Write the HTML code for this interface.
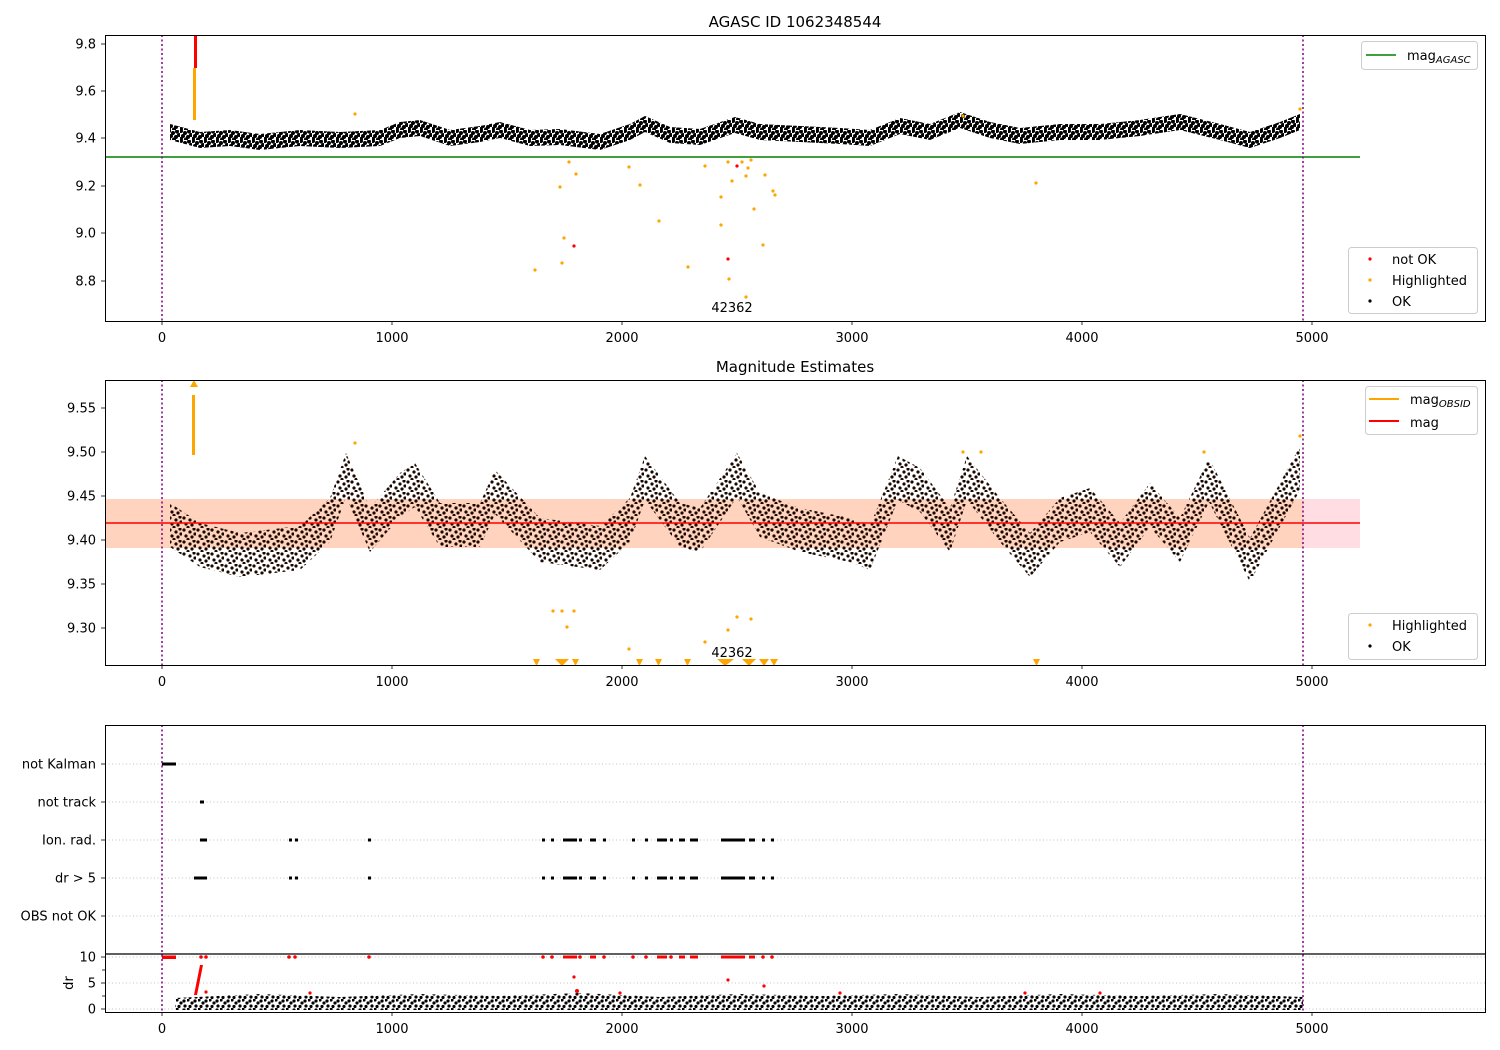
<!DOCTYPE html>
<html><head><meta charset="utf-8"><style>
html,body{margin:0;padding:0;background:#fff;}
svg{display:block;font-family:"DejaVu Sans","Liberation Sans",sans-serif;}
</style></head><body>
<svg width="1500" height="1050" viewBox="0 0 1500 1050" xmlns="http://www.w3.org/2000/svg">
<defs>
<pattern id="p1" width="12" height="10" patternUnits="userSpaceOnUse">
<g fill="#000"><circle cx="1" cy="1" r="2"/><circle cx="5" cy="3" r="2"/><circle cx="9" cy="1.5" r="2"/><circle cx="3" cy="6" r="2"/><circle cx="8" cy="7" r="2"/><circle cx="11" cy="5" r="2"/><circle cx="1" cy="9" r="2"/><circle cx="6" cy="9.5" r="2"/></g>
</pattern>
<pattern id="p2" width="14" height="12" patternUnits="userSpaceOnUse">
<g fill="#1a0800"><circle cx="2" cy="2" r="1.6"/><circle cx="8" cy="4" r="1.6"/><circle cx="12" cy="1" r="1.6"/><circle cx="4" cy="8" r="1.6"/><circle cx="10" cy="9" r="1.6"/><circle cx="6" cy="11.5" r="1.6"/><circle cx="13" cy="6" r="1.6"/></g>
</pattern>
<pattern id="p3" width="11" height="9" patternUnits="userSpaceOnUse">
<g fill="#000"><circle cx="1" cy="1" r="1.6"/><circle cx="5" cy="4" r="1.6"/><circle cx="9" cy="7" r="1.6"/><circle cx="3" cy="7.5" r="1.6"/><circle cx="8" cy="2" r="1.6"/></g>
</pattern>
</defs>
<rect width="1500" height="1050" fill="#fff"/>
<rect x="105" y="499" width="1255" height="49" fill="#ffdde2"/>
<rect x="105" y="499" width="1198" height="49" fill="#ffd3bd"/>
<g stroke="#b0b0b0" stroke-width="0.8" stroke-dasharray="1,2.5">
<line x1="105" x2="1485" y1="764" y2="764"/><line x1="105" x2="1485" y1="802" y2="802"/>
<line x1="105" x2="1485" y1="840" y2="840"/><line x1="105" x2="1485" y1="878" y2="878"/>
<line x1="105" x2="1485" y1="916" y2="916"/>
<line x1="105" x2="1485" y1="957" y2="957"/><line x1="105" x2="1485" y1="983" y2="983"/>
<line x1="105" x2="1485" y1="1009" y2="1009"/>
</g>
<polygon fill="url(#p1)" points="170,124 200,132 230,130 260,134 300,130 340,132 380,130 400,122 420,120 450,130 480,126 500,122 530,130 560,129 600,134 630,124 645,116 670,127 700,129 735,117 760,124 800,126 840,128 870,130 900,118 930,124 960,112 990,122 1020,128 1060,124 1100,124 1140,120 1180,114 1220,124 1250,132 1280,122 1300,114 1300,130 1280,138 1250,148 1220,140 1180,130 1140,136 1100,140 1060,140 1020,144 990,138 960,128 930,140 900,134 870,146 840,144 800,142 760,140 735,133 700,145 670,143 645,132 630,140 600,150 560,145 530,146 500,138 480,142 450,146 420,136 400,138 380,146 340,148 300,146 260,150 230,146 200,148 170,140"/>
<line x1="105" y1="157" x2="1360" y2="157" stroke="#008000" stroke-width="1.5"/>
<polygon fill="url(#p2)" points="170,503 200,523 240,533 300,526 330,498 346,453 370,508 400,473 415,463 440,503 480,503 495,470 540,518 600,526 630,498 645,456 680,503 700,508 737,453 760,493 800,508 850,518 870,526 898,456 920,468 950,508 967,456 1000,498 1030,533 1060,498 1090,488 1120,523 1150,483 1180,518 1209,458 1250,538 1300,446 1300,490 1250,582 1209,502 1180,562 1150,527 1120,567 1090,532 1060,542 1030,577 1000,542 967,500 950,552 920,512 898,500 870,570 850,562 800,552 760,537 737,497 700,552 680,547 645,500 630,542 600,570 540,562 495,514 480,547 440,547 415,507 400,517 370,552 346,497 330,542 300,570 240,577 200,567 170,547"/>
<line x1="105" y1="523" x2="1360" y2="523" stroke="#ff0000" stroke-width="1.5"/>
<polygon fill="url(#p3)" points="175,998 260,994 340,997 420,994 500,996 580,993 660,997 740,994 820,996 900,994 980,997 1060,994 1140,996 1220,994 1303,997 1303,1010 175,1010"/>
<g fill="orange">
<rect x="193" y="68" width="3" height="52"/>
<circle cx="535" cy="270" r="1.6"/><circle cx="560" cy="187" r="1.6"/><circle cx="562" cy="263" r="1.6"/><circle cx="564" cy="238" r="1.6"/><circle cx="569" cy="162" r="1.6"/><circle cx="576" cy="174" r="1.6"/>
<circle cx="629" cy="167" r="1.6"/><circle cx="640" cy="185" r="1.6"/><circle cx="659" cy="221" r="1.6"/><circle cx="688" cy="267" r="1.6"/><circle cx="705" cy="166" r="1.6"/><circle cx="721" cy="197" r="1.6"/><circle cx="721" cy="225" r="1.6"/><circle cx="728" cy="162" r="1.6"/><circle cx="729" cy="279" r="1.6"/><circle cx="732" cy="181" r="1.6"/><circle cx="742" cy="162" r="1.6"/><circle cx="746" cy="176" r="1.6"/><circle cx="748" cy="168" r="1.6"/><circle cx="751" cy="160" r="1.6"/><circle cx="754" cy="209" r="1.6"/><circle cx="763" cy="245" r="1.6"/><circle cx="765" cy="175" r="1.6"/><circle cx="773" cy="191" r="1.6"/><circle cx="775" cy="195" r="1.6"/><circle cx="746" cy="297" r="1.6"/><circle cx="1036" cy="183" r="1.6"/><circle cx="355" cy="114" r="1.6"/><circle cx="963" cy="116" r="1.6"/><circle cx="1300" cy="109" r="1.6"/>
</g>
<g fill="red"><rect x="194" y="36" width="3" height="32"/><circle cx="574" cy="246" r="1.6"/><circle cx="728" cy="259" r="1.6"/><circle cx="737" cy="166" r="1.6"/></g>
<g fill="orange">
<rect x="192" y="395" width="3" height="60"/>
<polygon points="190,387 198,387 194,380"/>
<circle cx="553" cy="611" r="1.6"/><circle cx="562" cy="611" r="1.6"/><circle cx="567" cy="627" r="1.6"/><circle cx="574" cy="611" r="1.6"/><circle cx="629" cy="649" r="1.6"/><circle cx="705" cy="642" r="1.6"/><circle cx="728" cy="630" r="1.6"/><circle cx="737" cy="617" r="1.6"/><circle cx="751" cy="619" r="1.6"/><circle cx="355" cy="443" r="1.6"/><circle cx="963" cy="452" r="1.6"/><circle cx="981" cy="452" r="1.6"/><circle cx="1204" cy="452" r="1.6"/><circle cx="1300" cy="436" r="1.6"/>
</g>
<g fill="orange">
<polygon points="533,659 540,659 536.5,666"/><polygon points="555,659 569,659 562,666"/><polygon points="572,659 579,659 575.5,666"/><polygon points="636,659 643,659 639.5,666"/><polygon points="655,659 662,659 658.5,666"/><polygon points="684,659 691,659 687.5,666"/><polygon points="717,659 734,659 725,666"/><polygon points="742,659 756,659 749,666"/><polygon points="759,659 769,659 764,666"/><polygon points="770,659 778,659 774,666"/><polygon points="1033,659 1040,659 1036.5,666"/>
</g>
<g fill="#000">
<rect x="162" y="762.5" width="14" height="3"/>
<rect x="200" y="800.5" width="4" height="3"/>
<g id="ev"><rect x="200" y="838.5" width="7" height="3"/><rect x="289" y="838.5" width="3" height="3"/><rect x="295" y="838.5" width="3" height="3"/><rect x="368" y="838.5" width="3" height="3"/><rect x="542" y="838.5" width="3" height="3"/><rect x="551" y="838.5" width="3" height="3"/><rect x="563" y="838.5" width="14" height="3"/><rect x="579" y="838.5" width="3" height="3"/><rect x="590" y="838.5" width="6" height="3"/><rect x="603" y="838.5" width="3" height="3"/><rect x="632" y="838.5" width="3" height="3"/><rect x="645" y="838.5" width="3" height="3"/><rect x="657" y="838.5" width="10" height="3"/><rect x="670" y="838.5" width="3" height="3"/><rect x="679" y="838.5" width="6" height="3"/><rect x="690" y="838.5" width="8" height="3"/><rect x="721" y="838.5" width="24" height="3"/><rect x="749" y="838.5" width="6" height="3"/><rect x="762" y="838.5" width="3" height="3"/><rect x="771" y="838.5" width="3" height="3"/></g>
<use href="#ev" y="38"/>
<rect x="194" y="876.5" width="12" height="3"/>
</g>
<g fill="red">
<rect x="162" y="955.5" width="14" height="3.5"/>
<polygon points="194,995 200,965 203,965 197,995"/>
<circle cx="201" cy="957" r="1.8"/><circle cx="206" cy="957" r="1.8"/><circle cx="289" cy="957" r="1.8"/><circle cx="295" cy="957" r="1.8"/><circle cx="369" cy="957" r="1.8"/><circle cx="543" cy="957" r="1.8"/><circle cx="552" cy="957" r="1.8"/><rect x="563" y="955.5" width="14" height="3"/><circle cx="580" cy="957" r="1.8"/><rect x="590" y="955.5" width="6" height="3"/><circle cx="604" cy="957" r="1.8"/><circle cx="633" cy="957" r="1.8"/><circle cx="646" cy="957" r="1.8"/><rect x="657" y="955.5" width="10" height="3"/><circle cx="671" cy="957" r="1.8"/><rect x="679" y="955.5" width="6" height="3"/><rect x="690" y="955.5" width="8" height="3"/><rect x="721" y="955.5" width="24" height="3"/><rect x="749" y="955.5" width="6" height="3"/><circle cx="763" cy="957" r="1.8"/><circle cx="772" cy="957" r="1.8"/>
<circle cx="574" cy="977" r="1.6"/><circle cx="577" cy="991" r="2"/><circle cx="728" cy="980" r="1.6"/><circle cx="764" cy="986" r="1.6"/><circle cx="206" cy="992" r="1.6"/><circle cx="310" cy="993" r="1.6"/><circle cx="620" cy="993" r="1.6"/><circle cx="840" cy="993" r="1.6"/><circle cx="1100" cy="993" r="1.6"/><circle cx="1025" cy="993" r="1.6"/>
</g>
<g stroke="#800080" stroke-width="1.5" stroke-dasharray="2,2.5">
<line x1="162" x2="162" y1="35" y2="321"/><line x1="1303" x2="1303" y1="35" y2="321"/>
<line x1="162" x2="162" y1="380" y2="665"/><line x1="1303" x2="1303" y1="380" y2="665"/>
<line x1="162" x2="162" y1="725" y2="1012"/><line x1="1303" x2="1303" y1="725" y2="1012"/>
</g>
<g fill="none" stroke="#000" stroke-width="1">
<rect x="105.5" y="35.5" width="1380" height="286"/>
<rect x="105.5" y="380.5" width="1380" height="285"/>
<rect x="105.5" y="725.5" width="1380" height="287"/>
</g>
<line x1="105" x2="1485" y1="954" y2="954" stroke="#000" stroke-width="1.2"/>
<g stroke="#000" stroke-width="0.8">
<g id="xt"><line x1="162" x2="162" y1="321" y2="325"/><line x1="392" x2="392" y1="321" y2="325"/><line x1="622" x2="622" y1="321" y2="325"/><line x1="852" x2="852" y1="321" y2="325"/><line x1="1082" x2="1082" y1="321" y2="325"/><line x1="1312" x2="1312" y1="321" y2="325"/></g>
<use href="#xt" y="344"/><use href="#xt" y="691"/>
<line x1="101" x2="105" y1="44" y2="44"/><line x1="101" x2="105" y1="91" y2="91"/><line x1="101" x2="105" y1="138" y2="138"/><line x1="101" x2="105" y1="186" y2="186"/><line x1="101" x2="105" y1="233" y2="233"/><line x1="101" x2="105" y1="281" y2="281"/>
<line x1="101" x2="105" y1="408" y2="408"/><line x1="101" x2="105" y1="452" y2="452"/><line x1="101" x2="105" y1="496" y2="496"/><line x1="101" x2="105" y1="540" y2="540"/><line x1="101" x2="105" y1="584" y2="584"/><line x1="101" x2="105" y1="628" y2="628"/>
<line x1="101" x2="105" y1="764" y2="764"/><line x1="101" x2="105" y1="802" y2="802"/><line x1="101" x2="105" y1="840" y2="840"/><line x1="101" x2="105" y1="878" y2="878"/><line x1="101" x2="105" y1="916" y2="916"/>
<line x1="101" x2="105" y1="957" y2="957"/><line x1="101" x2="105" y1="983" y2="983"/><line x1="101" x2="105" y1="1009" y2="1009"/>
<line x1="102" x2="105" y1="970" y2="970"/><line x1="102" x2="105" y1="996" y2="996"/>
</g>
<g font-size="13" fill="#000">
<g id="xl" text-anchor="middle"><text x="162" y="342">0</text><text x="392" y="342">1000</text><text x="622" y="342">2000</text><text x="852" y="342">3000</text><text x="1082" y="342">4000</text><text x="1312" y="342">5000</text></g>
<use href="#xl" y="344"/><use href="#xl" y="691"/>
<g text-anchor="end">
<text x="96" y="48.5">9.8</text><text x="96" y="95.5">9.6</text><text x="96" y="142.5">9.4</text><text x="96" y="190.5">9.2</text><text x="96" y="237.5">9.0</text><text x="96" y="285.5">8.8</text>
<text x="96" y="412.5">9.55</text><text x="96" y="456.5">9.50</text><text x="96" y="500.5">9.45</text><text x="96" y="544.5">9.40</text><text x="96" y="588.5">9.35</text><text x="96" y="632.5">9.30</text>
<text x="96" y="768.5">not Kalman</text><text x="96" y="806.5">not track</text><text x="96" y="844.5">Ion. rad.</text><text x="96" y="882.5">dr &gt; 5</text><text x="96" y="920.5">OBS not OK</text>
<text x="96" y="961.5">10</text><text x="96" y="987.5">5</text><text x="96" y="1013.5">0</text>
</g>
</g>
<text x="795" y="27" font-size="15" text-anchor="middle">AGASC ID 1062348544</text>
<text x="795" y="372" font-size="15" text-anchor="middle">Magnitude Estimates</text>
<text x="732" y="312" font-size="13" text-anchor="middle">42362</text>
<text x="732" y="657" font-size="13" text-anchor="middle">42362</text>
<text x="69" y="983" font-size="13" text-anchor="middle" transform="rotate(-90 69 983)" dy="4">dr</text>
<g font-size="13">
<rect x="1361.5" y="41.5" width="116" height="28" rx="3" fill="#fff" fill-opacity="0.8" stroke="#ccc"/>
<line x1="1366" x2="1396" y1="55" y2="55" stroke="#008000" stroke-width="1.5"/>
<text x="1407" y="60">mag<tspan font-size="10" font-style="italic" dy="3">AGASC</tspan></text>
<rect x="1348.5" y="247.5" width="129" height="66" rx="3" fill="#fff" fill-opacity="0.8" stroke="#ccc"/>
<circle cx="1370" cy="259" r="1.6" fill="red"/><text x="1392" y="264">not OK</text>
<circle cx="1370" cy="280" r="1.6" fill="orange"/><text x="1392" y="285">Highlighted</text>
<circle cx="1370" cy="301" r="1.6" fill="#000"/><text x="1392" y="306">OK</text>
<rect x="1365.5" y="386.5" width="112" height="48" rx="3" fill="#fff" fill-opacity="0.8" stroke="#ccc"/>
<line x1="1369" x2="1399" y1="399" y2="399" stroke="orange" stroke-width="2"/>
<text x="1410" y="404">mag<tspan font-size="10" font-style="italic" dy="3">OBSID</tspan></text>
<line x1="1369" x2="1399" y1="421" y2="421" stroke="red" stroke-width="2"/>
<text x="1410" y="427">mag</text>
<rect x="1348.5" y="613.5" width="129" height="46" rx="3" fill="#fff" fill-opacity="0.8" stroke="#ccc"/>
<circle cx="1370" cy="625" r="1.6" fill="orange"/><text x="1392" y="630">Highlighted</text>
<circle cx="1370" cy="646" r="1.6" fill="#000"/><text x="1392" y="651">OK</text>
</g>
</svg>
</body></html>
